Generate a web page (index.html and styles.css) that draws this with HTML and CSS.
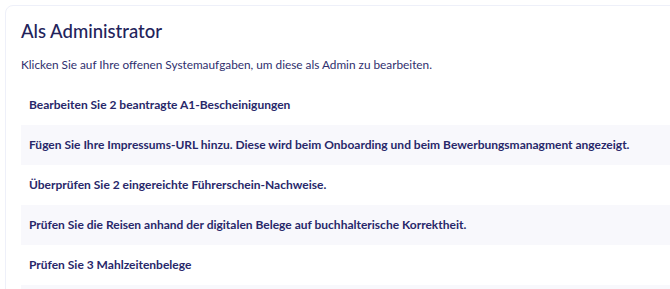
FILE: index.html
```html
<!DOCTYPE html>
<html lang="de">
<head>
  <meta charset="UTF-8" />
  <title>Als Administrator</title>
  <link rel="stylesheet" href="styles.css">
</head>
<body>
  <div class="card">
    <h2>Als Administrator</h2>
    <p class="intro">Klicken Sie auf Ihre offenen Systemaufgaben, um diese als Admin zu bearbeiten.</p>

    <ul class="tasks">
      <li>Bearbeiten Sie 2 beantragte A1-Bescheinigungen</li>
      <li>Fügen Sie Ihre Impressums-URL hinzu. Diese wird beim Onboarding und beim Bewerbungsmanagment angezeigt.</li>
      <li>Überprüfen Sie 2 eingereichte Führerschein-Nachweise.</li>
      <li>Prüfen Sie die Reisen anhand der digitalen Belege auf buchhalterische Korrektheit.</li>
      <li>Prüfen Sie 3 Mahlzeitenbelege</li>
      <li></li>
    </ul>
  </div>
</body>
</html>
```

FILE: styles.css
```css
body {
  font-family: 'Lato', 'Noto Sans', sans-serif;
  background-color: white;
  margin: 0;
  height: 289px;
  overflow: hidden;
}

.card {
  margin: 5px 0 0 5px;
  width: 700px;
  padding: 0 15px;
  border: 1px solid #eef0f9;
  border-radius: 8px;
  background-color: white;
}

.card h2 {
  margin: 0;
  padding-top: 13px;
  font-size: 18.5px;
  font-weight: 500;
  color: #23235b;
  line-height: 24px;
}

.intro {
  margin: 14px 0 12px;
  line-height: 16px;
  font-size: 11.8px;
  color: #2f2f6e;
}

.tasks {
  list-style: none;
  margin: 0;
  padding: 0;
}

.tasks li {
  height: 40px;
  line-height: 39px;
  padding-left: 8px;
  font-size: 12px;
  font-weight: bold;
  color: #28286a;
  cursor: pointer;
}

.tasks li:nth-child(even) {
  background-color: #f8f8fc;
}
```
